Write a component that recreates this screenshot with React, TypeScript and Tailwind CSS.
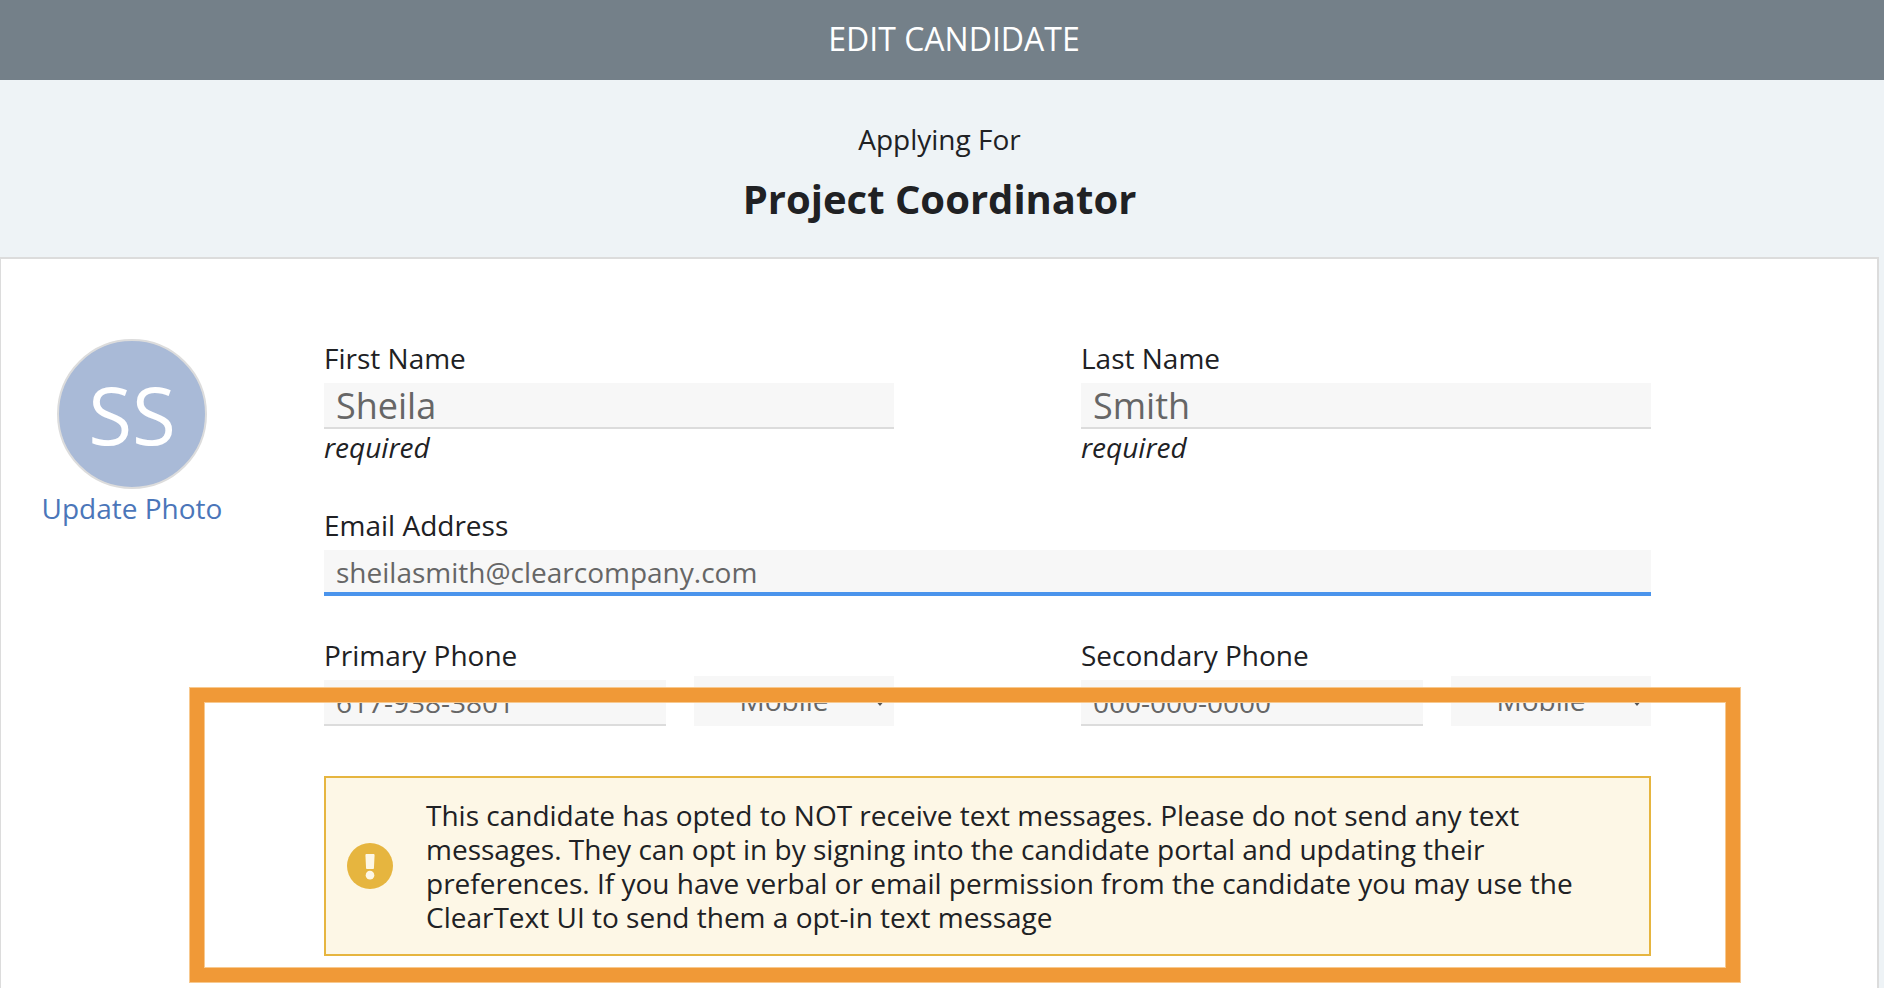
interface TextFieldProps {
  id: string;
  label: string;
  value: string;
  hint?: string;
}

interface PhoneFieldProps {
  id: string;
  label: string;
  value: string;
}

const PHONE_TYPES = ["Mobile", "Home", "Work"];

function TextField({ id, label, value, hint }: TextFieldProps) {
  return (
    <div className="flex min-w-0 flex-col">
      <label htmlFor={id} className="mb-[6px] leading-[38px]">
        {label}
      </label>
      <input
        id={id}
        type="text"
        defaultValue={value}
        className="h-[46px] w-full border-b-2 border-[#dcdcdc] bg-[#f7f7f7] px-3 text-4xl text-[#666] outline-none"
      />
      {hint ? <span className="leading-9 italic">{hint}</span> : null}
    </div>
  );
}

function PhoneField({ id, label, value }: PhoneFieldProps) {
  return (
    <div className="min-w-0">
      <label htmlFor={id} className="mb-[2px] block leading-[38px]">
        {label}
      </label>
      <div className="flex items-end gap-7">
        <input
          id={id}
          type="tel"
          defaultValue={value}
          className="h-[46px] min-w-0 flex-1 border-b-2 border-[#dcdcdc] bg-[#f7f7f7] px-3 text-[#666] outline-none"
        />
        <div className="relative w-[200px] shrink-0">
          <select
            aria-label={`${label} type`}
            defaultValue="Mobile"
            className="block h-[50px] w-full appearance-none bg-[#f7f7f7] pr-5 pb-[2px] text-center text-[#666] outline-none"
          >
            {PHONE_TYPES.map((type) => (
              <option key={type}>{type}</option>
            ))}
          </select>
          <svg
            viewBox="0 0 10 6"
            className="pointer-events-none absolute top-6 right-[9px] h-[6px] w-[10px] fill-[#555]"
            aria-hidden="true"
          >
            <path d="M0 0h10L5 6z" />
          </svg>
        </div>
      </div>
    </div>
  );
}

function AlertIcon() {
  return (
    <svg viewBox="0 0 512 512" className="size-[46px] shrink-0" aria-hidden="true">
      <circle cx="256" cy="256" r="256" fill="#e6b53f" />
      <path
        d="M217 122h78c7 0 12 5 12 12l-7 143c0 7-5 12-12 12h-64c-7 0-12-5-12-12l-7-143c0-7 5-12 12-12z"
        fill="#fdf7e6"
      />
      <circle cx="256" cy="358" r="48" fill="#fdf7e6" />
    </svg>
  );
}

export default function App() {
  return (
    <div className="flex min-h-screen flex-col bg-[#eef3f6] font-['Open_Sans',sans-serif] text-[28px] text-[#202124]">
      <header className="bg-[#748089] pt-[17px] pb-[19px] pl-6 text-center text-white">
        <h1 className="text-[32px] leading-11">EDIT CANDIDATE</h1>
      </header>

      <main className="mr-[5px] flex flex-1 flex-col">
        <div className="pt-10 pb-[30px] text-center">
          <p className="leading-[38px]">Applying For</p>
          <h2 className="mt-[13px] text-[40px] leading-14 font-bold">Project Coordinator</h2>
        </div>

        <section className="flex flex-1 items-start border-t-2 border-r-2 border-l border-[#dcdcdc] bg-white pt-20 pr-[226px] pb-8">
          <div className="flex w-[262px] shrink-0 flex-col items-center">
            <div className="flex size-[150px] items-center justify-center rounded-full border-2 border-[#dcdcdc] bg-[#a9bad7] text-[80px] leading-none text-white">
              SS
            </div>
            <a href="#photo" className="leading-[38px] text-[#4b76b9]">
              Update Photo
            </a>
          </div>

          <form className="ml-[61px] min-w-0 flex-1">
            <div className="grid grid-cols-2 gap-x-[187px]">
              <TextField id="first-name" label="First Name" value="Sheila" hint="required" />
              <TextField id="last-name" label="Last Name" value="Smith" hint="required" />
            </div>

            <div className="mt-[41px] flex flex-col">
              <label htmlFor="email" className="mb-[6px] leading-[38px]">
                Email Address
              </label>
              <input
                id="email"
                type="email"
                defaultValue="sheilasmith@clearcompany.com"
                className="h-[46px] w-full border-b-4 border-[#4a94ec] bg-[#f7f7f7] px-3 pt-[2px] text-[#666] outline-none"
              />
            </div>

            <div className="relative mt-10">
              <div className="grid grid-cols-2 gap-x-[187px]">
                <PhoneField id="primary-phone" label="Primary Phone" value="617-938-3801" />
                <PhoneField id="secondary-phone" label="Secondary Phone" value="000-000-0000" />
              </div>

              <div
                role="alert"
                className="mt-[50px] flex items-center gap-[33px] border-2 border-[#e6b53f] bg-[#fdf7e6] px-[21px] py-5"
              >
                <AlertIcon />
                <p className="max-w-[1160px] leading-[34px]">
                  This candidate has opted to NOT receive text messages. Please do not send any text messages. They can
                  opt in by signing into the candidate portal and updating their preferences. If you have verbal or
                  email permission from the candidate you may use the ClearText UI to send them a opt-in text message
                </p>
              </div>

              {/* highlight around the opt-out notice */}
              <div className="pointer-events-none absolute top-[52px] -right-[89px] -bottom-[26px] -left-[134px] border-[14px] border-[#f09937] shadow-[0_0_0_1px_#f8c98f,inset_0_0_0_1px_#f8c98f]" />
            </div>
          </form>
        </section>
      </main>
    </div>
  );
}
